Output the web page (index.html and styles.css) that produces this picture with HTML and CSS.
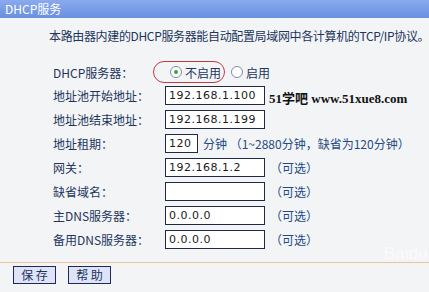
FILE: index.html
```html
<!DOCTYPE html>
<html lang="zh-CN">
<head>
    <meta charset="UTF-8">
    <title>DHCP服务</title>
    <link rel="stylesheet" href="styles.css">
</head>
<body>
    <div class="title-bar">DHCP服务</div>

    <p class="intro">本路由器内建的DHCP服务器能自动配置局域网中各计算机的TCP/IP协议。</p>

    <div class="form">
        <div class="row row-first">
            <span class="label">DHCP服务器：</span>
            <span class="field">
                <span class="option circled"><span class="radio checked"></span>不启用</span>
                <span class="option"><span class="radio"></span>启用</span>
            </span>
        </div>
        <div class="row">
            <span class="label">地址池开始地址：</span>
            <span class="field"><span class="input">192.168.1.100</span></span>
        </div>
        <div class="row">
            <span class="label">地址池结束地址：</span>
            <span class="field"><span class="input">192.168.1.199</span></span>
        </div>
        <div class="row">
            <span class="label">地址租期：</span>
            <span class="field"><span class="input short">120</span><span class="hint">分钟 （1~2880分钟，缺省为120分钟）</span></span>
        </div>
        <div class="row">
            <span class="label">网关：</span>
            <span class="field"><span class="input">192.168.1.2</span><span class="hint">（可选）</span></span>
        </div>
        <div class="row">
            <span class="label">缺省域名：</span>
            <span class="field"><span class="input"></span><span class="hint">（可选）</span></span>
        </div>
        <div class="row">
            <span class="label">主DNS服务器：</span>
            <span class="field"><span class="input">0.0.0.0</span><span class="hint">（可选）</span></span>
        </div>
        <div class="row">
            <span class="label">备用DNS服务器：</span>
            <span class="field"><span class="input">0.0.0.0</span><span class="hint">（可选）</span></span>
        </div>

        <!-- 水印 -->
        <div class="site-mark">51学吧 www.51xue8.com</div>
    </div>

    <div class="actions">
        <button>保 存</button>
        <button>帮 助</button>
    </div>

    <div class="baidu-mark">Baidu</div>
</body>
</html>
```

FILE: styles.css
```css
body {
    margin: 0;
    background-color: #f3f4f6;
    font-family: "Noto Sans CJK SC", "Noto Sans", sans-serif;
    font-size: 12px;
    color: #22345c;
    position: relative;
    height: 292px;
    overflow: hidden;
}
.title-bar {
    height: 18px;
    line-height: 17px;
    padding-left: 5px;
    color: #fff;
    background: linear-gradient(#8aaaee, #6890e0);
}
.intro {
    margin: 0;
    padding: 10px 0 0 49px;
    height: 20px;
    line-height: 16px;
    white-space: nowrap;
    letter-spacing: -0.35px;
}
.form {
    position: relative;
    padding-top: 13px;
}
.row {
    display: flex;
    align-items: center;
    height: 24px;
}
.row-first {
    height: 22px;
}
.label {
    width: 112px;
    padding-left: 53px;
    white-space: nowrap;
}
.field {
    display: flex;
    align-items: center;
}
.option {
    display: inline-flex;
    align-items: center;
    height: 20px;
}
.circled {
    margin-left: -12px;
    padding: 0 3px 0 16px;
    border: 1px solid #c03a40;
    border-radius: 11px;
    margin-right: 6px;
}
.radio {
    width: 10px;
    height: 10px;
    border: 1px solid #7d8fa8;
    border-radius: 50%;
    background: #fff;
    margin-right: 3px;
    position: relative;
}
.radio.checked::after {
    content: "";
    position: absolute;
    left: 3px;
    top: 3px;
    width: 4px;
    height: 4px;
    border-radius: 50%;
    background: #3aa63a;
}
.input {
    box-sizing: border-box;
    width: 100px;
    height: 19px;
    border: 1px solid #1e2a45;
    background: #fff;
    color: #1a1a1a;
    padding-left: 3px;
    line-height: 17px;
    font-family: "DejaVu Sans", sans-serif;
    font-size: 11px;
    letter-spacing: 0.5px;
}
.input.short {
    width: 33px;
}
.hint {
    margin-left: 5px;
    white-space: nowrap;
    color: #234a86;
}
.site-mark {
    position: absolute;
    left: 269px;
    top: 40px;
    font-family: "Liberation Serif", "Noto Sans CJK SC", serif;
    font-weight: bold;
    font-size: 13px;
    color: #111;
}
.actions {
    margin-top: 11px;
    border-top: 1px solid #ecc39c;
    padding: 3px 0 0 13px;
    display: flex;
    gap: 12px;
}
button {
    font-family: "Noto Sans CJK SC", sans-serif;
    font-size: 12px;
    color: #22345c;
    background-color: #dfe3f7;
    border: 1px solid #1e2a55;
    height: 18px;
    width: 43px;
    padding: 0;
    line-height: 14px;
}
.baidu-mark {
    position: absolute;
    left: 384px;
    top: 244px;
    font-family: "Liberation Sans", sans-serif;
    font-size: 17px;
    color: #fbfbfc;
}
```
